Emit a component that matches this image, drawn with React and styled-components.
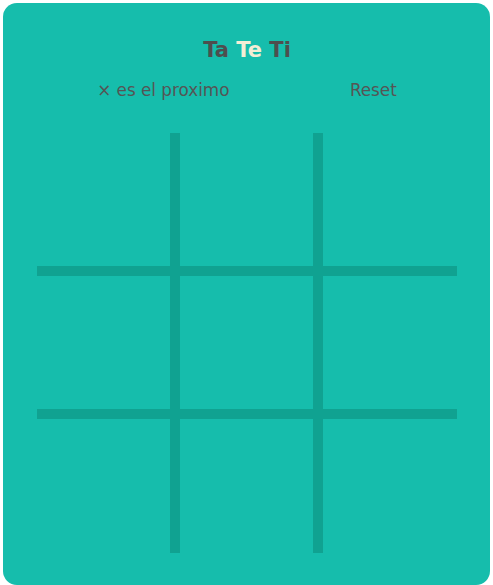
import styled, { createGlobalStyle } from 'styled-components';

const Global = createGlobalStyle`
  html, body {
    margin: 0;
    padding: 0;
    background: #ffffff;
  }
  body {
    padding: 3px;
    font-family: "DejaVu Sans", Verdana, sans-serif;
  }
`;

const Card = styled.div`
  width: 487px;
  height: 582px;
  box-sizing: border-box;
  background-color: #16bdac;
  border-radius: 14px;
  padding: 35px 33px 0 34px;
  display: flex;
  flex-direction: column;
  align-items: center;
`;

const Title = styled.h1`
  margin: 0;
  font-size: 21px;
  line-height: 24px;
  font-weight: bold;
  color: #4e4e4e;
`;

const Accent = styled.span`
  color: #f4eed5;
`;

const Bar = styled.div`
  width: 420px;
  display: flex;
  justify-content: space-around;
  margin-top: 18px;
`;

const Label = styled.span`
  font-size: 16.8px;
  line-height: 20px;
  color: #555555;
  cursor: ${(p) => (p.$clickable ? 'pointer' : 'default')};
`;

const Board = styled.div`
  margin-top: 33px;
  width: 420px;
  height: 420px;
  display: grid;
  grid-template-columns: 133px 133px 134px;
  grid-template-rows: 133px 133px 134px;
  gap: 10px;
  background-color: #10a291;
`;

const Cell = styled.div`
  background-color: #16bdac;
`;

export default function App() {
  return (
    <>
      <Global />
      <Card>
        <Title>
          Ta <Accent>Te</Accent> Ti
        </Title>
        <Bar>
          <Label>× es el proximo</Label>
          <Label $clickable>Reset</Label>
        </Bar>
        <Board>
          {Array.from({ length: 9 }, (_, i) => (
            <Cell key={i} />
          ))}
        </Board>
      </Card>
    </>
  );
}
